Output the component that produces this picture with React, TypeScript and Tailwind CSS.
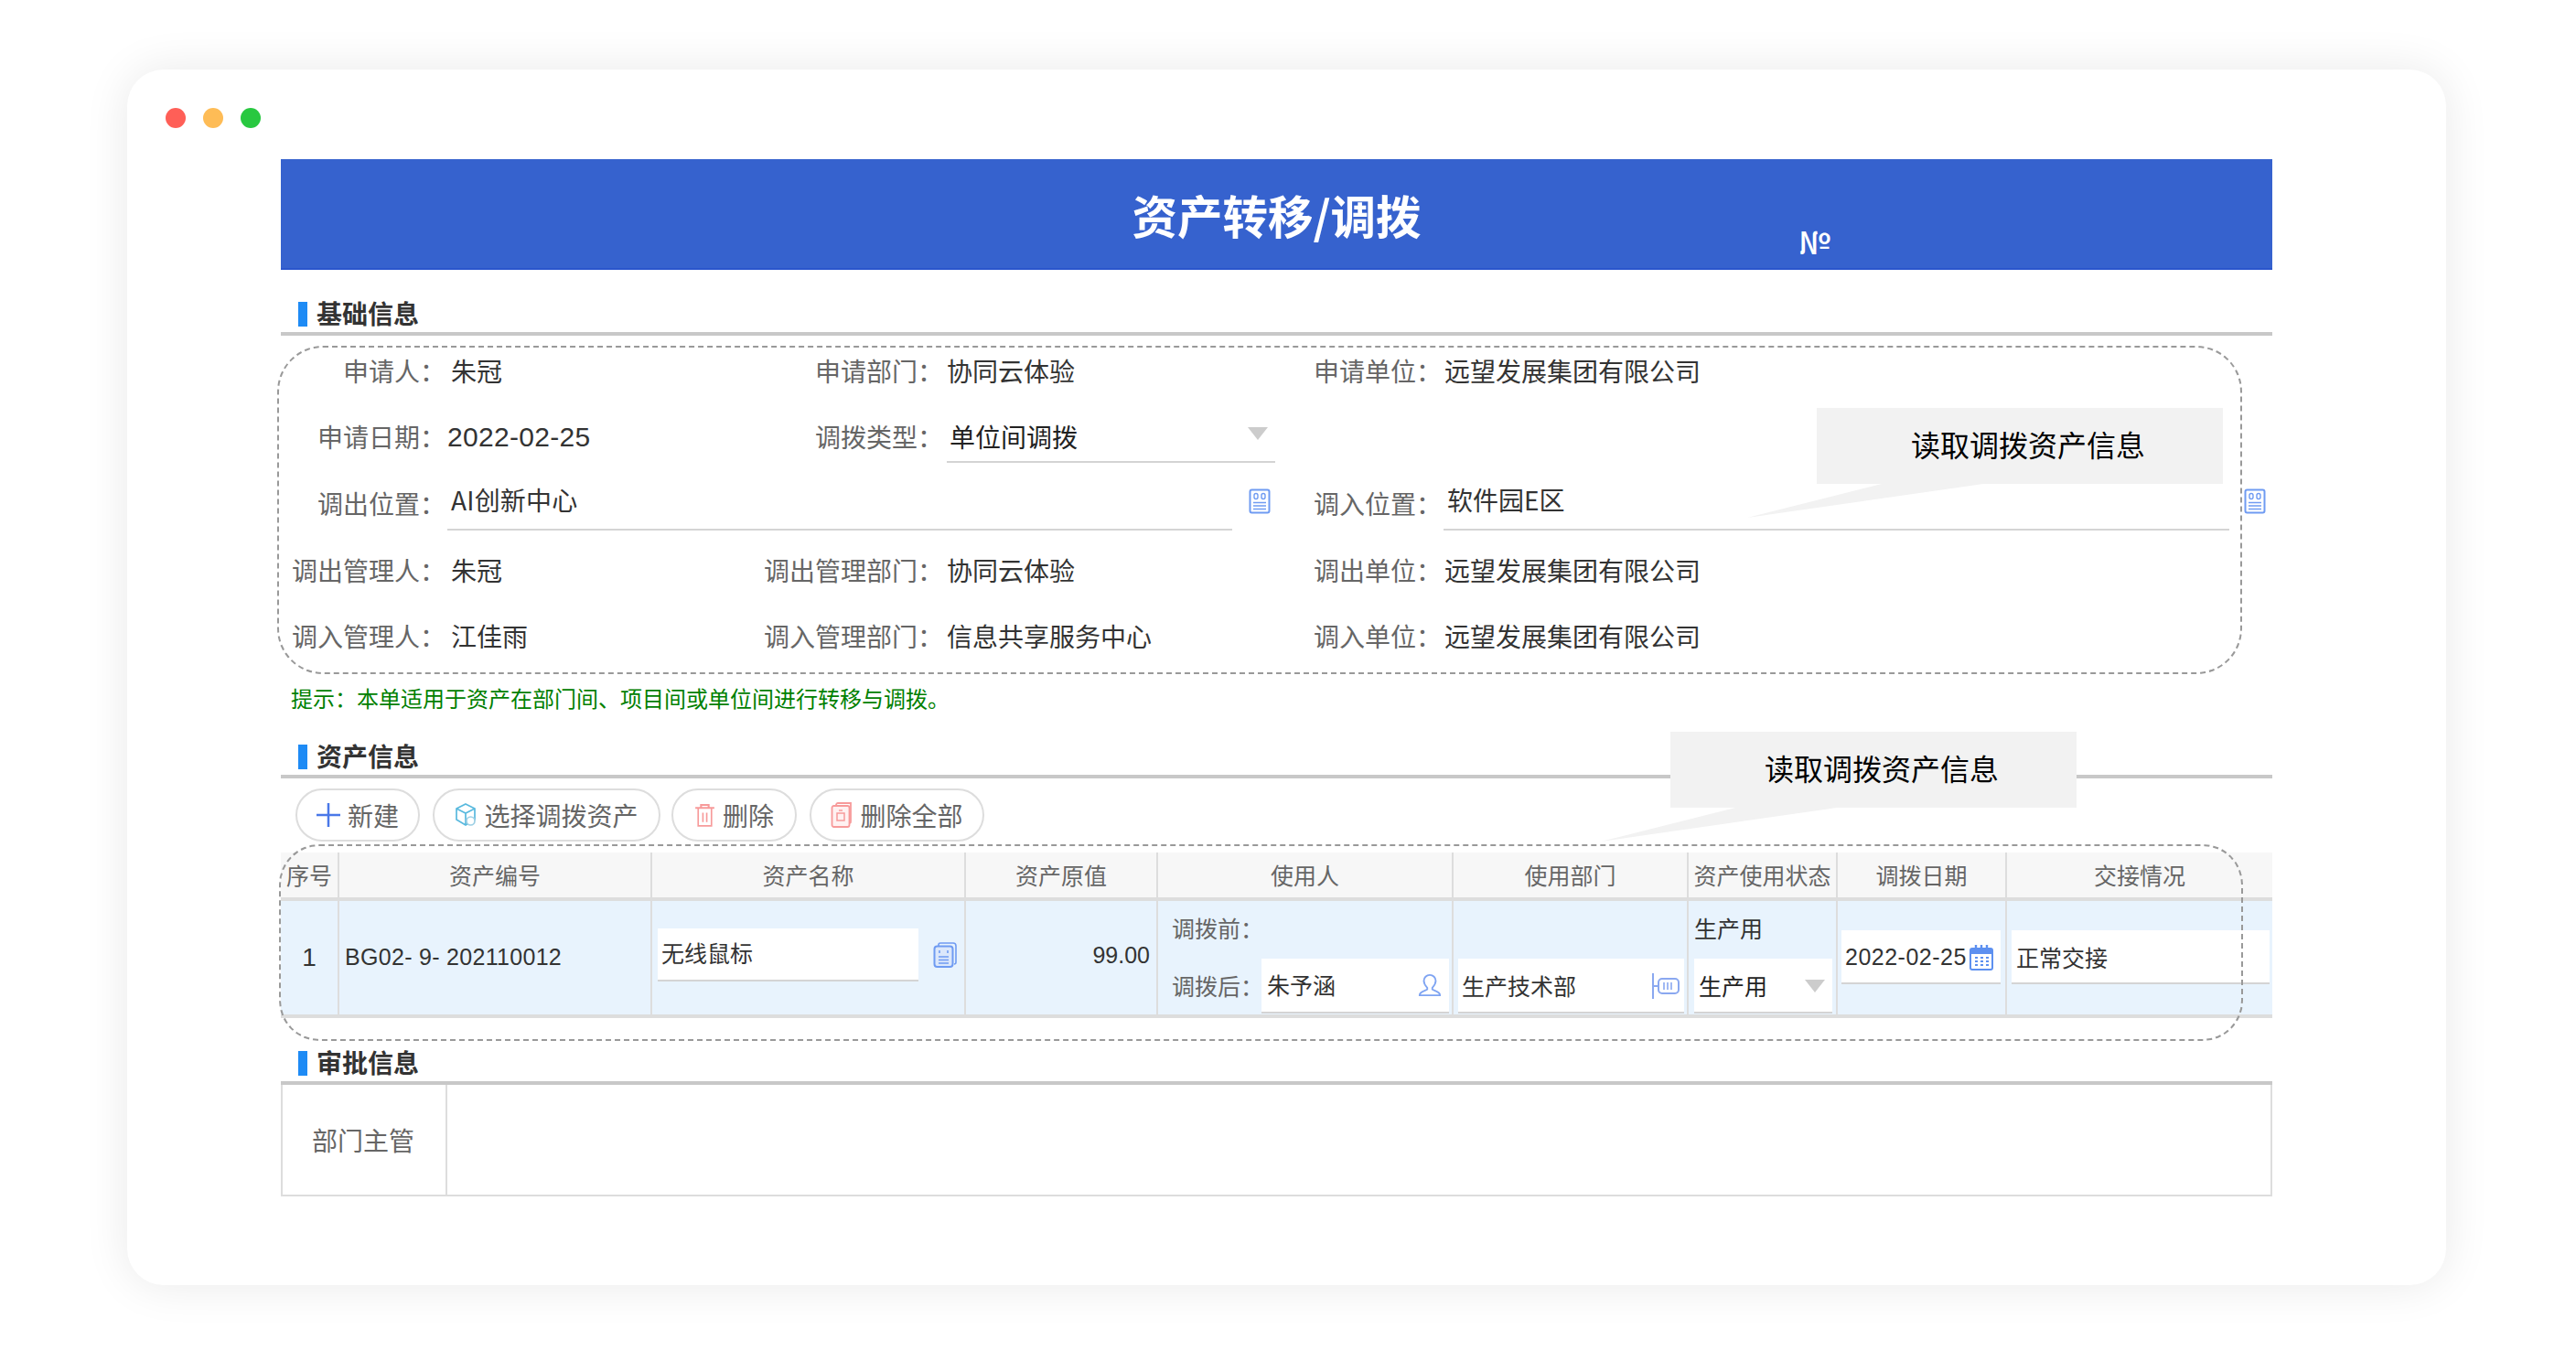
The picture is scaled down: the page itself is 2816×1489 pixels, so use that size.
const cn = { fontFamily: '"Noto Sans CJK SC", "Noto Sans", sans-serif' };

function DocIcon({ className }: { className?: string }) {
  return (
    <svg viewBox="0 0 24 28" className={className} fill="none" stroke="#6f9bf2" strokeWidth="2">
      <rect x="1.5" y="1.5" width="21" height="25" rx="2" />
      <rect x="6" y="5.5" width="4" height="6" rx="2" strokeWidth="1.4" />
      <rect x="14" y="5.5" width="4" height="6" rx="2" strokeWidth="1.4" />
      <path d="M5 15.5h14M5 19h14M5 22.5h14" strokeWidth="1.6" />
    </svg>
  );
}

function StackIcon({ className }: { className?: string }) {
  return (
    <svg viewBox="0 0 26 28" className={className} fill="none" stroke="#6f9bf2" strokeWidth="2">
      <path d="M6 4V3a2 2 0 0 1 2-2h14a3 3 0 0 1 3 3v18a2 2 0 0 1-2 2" strokeWidth="1.6" />
      <rect x="1.5" y="4.5" width="20" height="22.5" rx="3" fill="#dbe7fb" />
      <path d="M7 9v3M16 9v3M6 16h11M6 19.5h11M6 23h11" strokeWidth="1.6" />
    </svg>
  );
}

function ToolbarButton({ w, icon, label }: { w: string; icon: React.ReactNode; label: string }) {
  return (
    <button
      type="button"
      className={`flex h-[58px] items-center justify-center gap-2 rounded-full border-2 border-[#dddddd] bg-white text-[28px] text-[#666666] ${w}`}
    >
      {icon}
      <span className="whitespace-nowrap">{label}</span>
    </button>
  );
}

function SectionTitle({ title, className }: { title: string; className?: string }) {
  return (
    <div className={`flex h-[44px] items-center border-b-4 border-[#c8c8c8] pl-[19px] ${className ?? ""}`}>
      <span className="h-[27px] w-[10px] bg-[#1e8bf5]" />
      <span className="ml-[10px] pb-[2px] text-[28px] leading-none font-bold text-[#333333]">{title}</span>
    </div>
  );
}

function Label({ text, className }: { text: string; className?: string }) {
  return <div className={`text-right whitespace-nowrap text-[#666666] ${className ?? ""}`}>{text}</div>;
}

function Callout({ className }: { className: string }) {
  return (
    <div className={`absolute flex h-[83px] w-[444px] items-center justify-center bg-[#f2f2f2] pb-[5px] pl-[18px] text-[32px] text-black ${className}`}>
      读取调拨资产信息
      <svg className="absolute top-full left-[-76px] h-[38px] w-[270px]" viewBox="0 0 270 38">
        <polygon points="147,0 258,0 0,37" fill="#f2f2f2" />
      </svg>
    </div>
  );
}

function Th({ children, className }: { children: React.ReactNode; className?: string }) {
  return (
    <div className={`flex items-center justify-center border-r-2 border-[#dddddd] text-[25px] text-[#666666] ${className ?? ""}`}>
      {children}
    </div>
  );
}

function Arrow({ className }: { className?: string }) {
  return (
    <svg viewBox="0 0 22 14" className={`h-[14px] w-[22px] ${className ?? ""}`}>
      <polygon points="0,0 22,0 11,14" fill="#cccccc" />
    </svg>
  );
}

const rowCols = "grid grid-cols-[180px_344px_200px_365px_180px_908px] items-center text-[28px] text-[#333333]";

export default function App() {
  return (
    <div className="h-[1489px] w-[2816px] overflow-hidden bg-white pt-[76px] pl-[139px]" style={cn}>
      <div className="relative h-[1329px] w-[2535px] rounded-[40px] bg-white pr-[190px] pl-[168px] shadow-[0_0_50px_rgba(0,0,0,0.09)]">
        {/* window dots */}
        <div className="absolute top-[42px] left-[42px] flex gap-[19px]">
          <span className="h-[22px] w-[22px] rounded-full bg-[#ff5f57]" />
          <span className="h-[22px] w-[22px] rounded-full bg-[#febc56]" />
          <span className="h-[22px] w-[22px] rounded-full bg-[#28c840]" />
        </div>

        <div className="h-[98px]" />

        <div className="relative flex h-[121px] items-center justify-center border-b-2 border-[#2a55cc] bg-[#3662ce] pt-[3px] text-[49.5px] font-bold text-white">
          资产转移/调拨
          <span className="absolute top-[70px] left-[1659px] text-[34px] leading-[40px] font-medium">№</span>
        </div>

        <SectionTitle title="基础信息" className="mt-[28px]" />

        {/* form */}
        <div className="mt-[5px]">
          <div className={`${rowCols} h-[70px] pb-[5px]`}>
            <Label text="申请人：" />
            <div className="pl-[6px]">朱冠</div>
            <Label text="申请部门：" />
            <div className="pl-[4px]">协同云体验</div>
            <Label text="申请单位：" />
            <div className="pl-[3px]">远望发展集团有限公司</div>
          </div>
          <div className={`${rowCols} h-[72px]`}>
            <Label text="申请日期：" className="pb-[2px]" />
            <div className="pb-[2px] pl-[2px] font-['Liberation_Sans'] text-[30px] tracking-[0.3px]">2022-02-25</div>
            <Label text="调拨类型：" className="pb-[2px]" />
            <div className="ml-[4px] flex h-[54px] w-[359px] translate-y-[1px] items-center justify-between border-b-2 border-[#d4d4d4] pr-[8px] pb-[2px] pl-[3px] text-[#222222]">
              <span>单位间调拨</span>
              <Arrow className="mb-[6px]" />
            </div>
          </div>
          <div className={`${rowCols} h-[68px]`}>
            <Label text="调出位置：" className="pt-[3px]" />
            <div className="col-span-3 ml-[2px] flex items-center">
              <div className="flex h-[64px] w-[858px] items-center border-b-2 border-[#d4d4d4] pb-[2px] pl-[4px] tracking-[0.2px]">AI创新中心</div>
              <DocIcon className="ml-[18px] h-[28px] w-[24px]" />
            </div>
            <Label text="调入位置：" className="pt-[3px]" />
            <div className="ml-[2px] flex items-center">
              <div className="flex h-[64px] w-[859px] items-center border-b-2 border-[#d4d4d4] pb-[2px] pl-[4px]">软件园E区</div>
              <DocIcon className="ml-[16px] h-[28px] w-[24px]" />
            </div>
          </div>
          <div className={`${rowCols} h-[82px]`}>
            <Label text="调出管理人：" />
            <div className="pl-[6px]">朱冠</div>
            <Label text="调出管理部门：" />
            <div className="pl-[4px]">协同云体验</div>
            <Label text="调出单位：" />
            <div className="pl-[3px]">远望发展集团有限公司</div>
          </div>
          <div className={`${rowCols} h-[64px] pb-[2px]`}>
            <Label text="调入管理人：" />
            <div className="pl-[6px]">江佳雨</div>
            <Label text="调入管理部门：" />
            <div className="pl-[4px]">信息共享服务中心</div>
            <Label text="调入单位：" />
            <div className="pl-[3px]">远望发展集团有限公司</div>
          </div>
        </div>

        <div className="mt-[18px] h-[34px] pl-[11px] text-[24px] leading-[34px] text-[#008000]">
          提示：本单适用于资产在部门间、项目间或单位间进行转移与调拨。
        </div>

        <SectionTitle title="资产信息" className="mt-[27px]" />

        {/* toolbar */}
        <div className="mt-[11px] flex pl-[16px]">
          <ToolbarButton
            w="w-[136px]"
            label="新建"
            icon={
              <svg viewBox="0 0 26 26" className="h-[26px] w-[26px]" fill="none" stroke="#4a78e8" strokeWidth="2.5">
                <path d="M13 0v26M0 13h26" />
              </svg>
            }
          />
          <div className="ml-[14px]">
            <ToolbarButton
              w="w-[249px]"
              label="选择调拨资产"
              icon={
                <svg viewBox="0 0 24 28" className="h-[28px] w-[24px]" fill="none" stroke="#58b9de" strokeWidth="1.7">
                  <path d="M12 2l10 5v12l-10 6-10-6V7zM2 7l10 5 10-5M12 12v13" />
                  <circle cx="17.5" cy="20.5" r="4.5" fill="#ffffff" stroke="#9ccfe4" />
                </svg>
              }
            />
          </div>
          <div className="ml-[12px]">
            <ToolbarButton
              w="w-[137px]"
              label="删除"
              icon={
                <svg viewBox="0 0 22 26" className="h-[27px] w-[23px]" fill="none" stroke="#f79a9a" strokeWidth="2">
                  <path d="M1 5h20M7 5V2h8v3" />
                  <path d="M4 5v19h14V5M9 10v10M13 10v10" strokeWidth="1.6" />
                </svg>
              }
            />
          </div>
          <div className="ml-[14px]">
            <ToolbarButton
              w="w-[191px]"
              label="删除全部"
              icon={
                <svg viewBox="0 0 24 28" className="h-[28px] w-[24px]" fill="none" stroke="#f79a9a" strokeWidth="1.8">
                  <path d="M6 3a2 2 0 0 1 2-2h14v20a2 2 0 0 1-1 2" />
                  <rect x="1.5" y="4" width="19" height="23" rx="2" fill="#fff1f1" />
                  <path d="M7 12h8v8H7zM9 9h4" strokeWidth="1.5" />
                </svg>
              }
            />
          </div>
        </div>

        {/* table */}
        <div className="mt-[12px] grid grid-cols-[64px_342px_343px_210px_323px_257px_163px_185px_290px] grid-rows-[53px_128px] text-[25px] text-[#333333]">
          <Th className="border-b-4 bg-[#f7f7f7] whitespace-nowrap">序号</Th>
          <Th className="border-b-4 bg-[#f7f7f7]">资产编号</Th>
          <Th className="border-b-4 bg-[#f7f7f7]">资产名称</Th>
          <Th className="border-b-4 bg-[#f7f7f7]">资产原值</Th>
          <Th className="border-b-4 bg-[#f7f7f7]">使用人</Th>
          <Th className="border-b-4 bg-[#f7f7f7]">使用部门</Th>
          <Th className="border-b-4 bg-[#f7f7f7] text-[24px] whitespace-nowrap">资产使用状态</Th>
          <Th className="border-b-4 bg-[#f7f7f7]">调拨日期</Th>
          <div className="flex items-center justify-center border-b-4 border-[#dddddd] bg-[#f7f7f7] text-[25px] text-[#666666]">交接情况</div>

          <div className="flex items-center justify-center border-r-2 border-b-4 border-[#dddddd] bg-[#e8f3fd] font-['Liberation_Sans'] text-[28px]">1</div>
          <div className="flex items-center border-r-2 border-b-4 border-[#dddddd] bg-[#e8f3fd] pl-[6px] font-['Liberation_Sans'] text-[25px] tracking-[0.3px] whitespace-pre">BG02- 9- 202110012</div>
          <div className="flex items-center border-r-2 border-b-4 border-[#dddddd] bg-[#e8f3fd] pb-[6px] pl-[6px]">
            <div className="flex h-[58px] w-[285px] items-start border-b-2 border-[#d4d4d4] bg-white pt-[8px] pl-[4px] text-[25px]">无线鼠标</div>
            <StackIcon className="ml-[16px] h-[28px] w-[26px]" />
          </div>
          <div className="flex items-center justify-end border-r-2 border-b-4 border-[#dddddd] bg-[#e8f3fd] pr-[7px] pb-[4px] font-['Liberation_Sans'] text-[25px]">99.00</div>
          <div className="flex flex-col border-r-2 border-b-4 border-[#dddddd] bg-[#e8f3fd] pt-[11px] pl-[15px]">
            <div className="h-[52px] text-[#666666]">调拨前：</div>
            <div className="flex items-center">
              <span className="w-[98px] shrink-0 whitespace-nowrap text-[#666666]">调拨后：</span>
              <div className="flex h-[60px] w-[205px] shrink-0 items-center justify-between border-b-2 border-[#d4d4d4] bg-white pr-[8px] pl-[6px]">
                <span>朱予涵</span>
                <svg viewBox="0 0 28 28" className="h-[26px] w-[26px]" fill="none" stroke="#7fa4f2" strokeWidth="2">
                  <path d="M14 2a7 7 0 0 1 7 7c0 4-2 6-4 8v2c2 2 9 2 9 7H2c0-5 7-5 9-7v-2c-2-2-4-4-4-8a7 7 0 0 1 7-7z" />
                </svg>
              </div>
            </div>
          </div>
          <div className="flex flex-col justify-end border-r-2 border-b-4 border-[#dddddd] bg-[#e8f3fd] pb-[1px] pl-[5px]">
            <div className="flex h-[60px] w-[247px] items-center justify-between border-b-2 border-[#d4d4d4] bg-white pt-[2px] pr-[5px] pl-[4px]">
              <span>生产技术部</span>
              <svg viewBox="0 0 30 28" className="h-[28px] w-[30px]" fill="none" stroke="#8aa8f0" strokeWidth="2">
                <path d="M1 0v28M1 14h6" />
                <rect x="7" y="6" width="22" height="16" rx="4" />
                <path d="M13 10v8M17 10v8M21 10v8" strokeWidth="1.6" />
              </svg>
            </div>
          </div>
          <div className="flex flex-col border-r-2 border-b-4 border-[#dddddd] bg-[#e8f3fd] pt-[11px] pl-[6px]">
            <div className="h-[52px] text-[#333333]">生产用</div>
            <div className="flex h-[60px] w-[151px] items-center justify-between border-b-2 border-[#d4d4d4] bg-white pt-[2px] pr-[8px] pl-[5px] text-[#222222]">
              <span>生产用</span>
              <Arrow className="h-[14px] w-[18px]" />
            </div>
          </div>
          <div className="flex items-start border-r-2 border-b-4 border-[#dddddd] bg-[#e8f3fd] pt-[32px] pl-[4px]">
            <div className="flex h-[59px] w-[174px] items-center border-b-2 border-[#d4d4d4] bg-white pt-[2px] pl-[4px] font-['Liberation_Sans'] text-[25px]">
              <span className="tracking-[0.5px] whitespace-nowrap">2022-02-25</span>
              <svg viewBox="0 0 26 28" className="ml-[3px] h-[28px] w-[26px] shrink-0" fill="none">
                <rect x="1" y="4" width="24" height="23" rx="2" stroke="#5d90f0" strokeWidth="2" />
                <rect x="1" y="4" width="24" height="6" fill="#5d90f0" />
                <path d="M7 0v6M13 0v6M19 0v6" stroke="#5d90f0" strokeWidth="2.4" />
                <path d="M6 14h3M12 14h3M18 14h3M6 18h3M12 18h3M18 18h3M6 22h3M12 22h3M18 22h3" stroke="#5d90f0" strokeWidth="2" />
              </svg>
            </div>
          </div>
          <div className="flex items-start border-b-4 border-[#dddddd] bg-[#e8f3fd] pt-[32px] pl-[5px]">
            <div className="flex h-[59px] w-[282px] items-center border-b-2 border-[#d4d4d4] bg-white pt-[2px] pl-[5px]">正常交接</div>
          </div>
        </div>

        <SectionTitle title="审批信息" className="mt-[29px]" />

        <div className="grid h-[122px] grid-cols-[180px_1fr] border-x-2 border-b-2 border-[#dddddd]">
          <div className="flex items-center justify-center border-r-2 border-[#dddddd] pr-[2px] text-[28px] text-[#666666]">部门主管</div>
          <div />
        </div>

        {/* dashed highlight frames and callouts */}
        <div className="pointer-events-none absolute top-[302px] left-[164px] h-[359px] w-[2148px] rounded-[50px] border-2 border-dashed border-[#999999]" />
        <div className="pointer-events-none absolute top-[847px] left-[166px] h-[215px] w-[2147px] rounded-[44px] border-2 border-dashed border-[#999999]" />
        <Callout className="top-[370px] left-[1847px]" />
        <Callout className="top-[724px] left-[1687px]" />
      </div>
    </div>
  );
}
